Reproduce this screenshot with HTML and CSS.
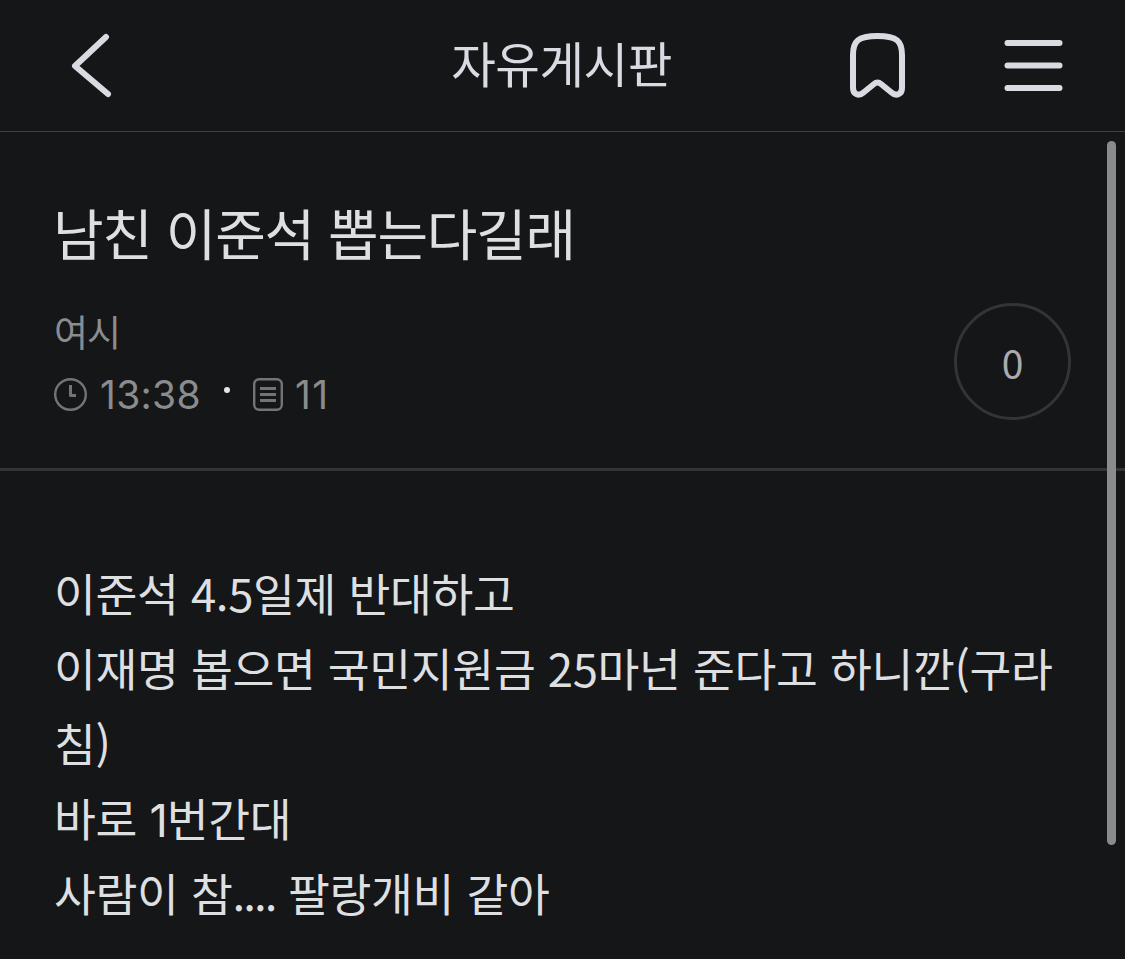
FILE: index.html
```html
<!DOCTYPE html>
<html lang="ko">
<head>
  <meta charset="UTF-8">
  <title>자유게시판</title>
  <link rel="stylesheet" href="styles.css">
</head>
<body>
  <header class="topbar">
    <svg class="icon-back" width="48" height="70" viewBox="0 0 48 70" fill="none">
      <path d="M42 6L11 35L44 63"/>
    </svg>
    <h1 class="board-name">자유게시판</h1>
    <div class="actions">
      <svg width="56" height="66" viewBox="0 0 56 66" fill="none">
        <path d="M4 22C4 8 9 3 28.500 3C48 3 53 8 53 22V55C53 61.500 47 63.500 42.500 59.500L32 51Q28.500 48 25 51L14.500 59.500C10 63.500 4 61.500 4 55Z"/>
      </svg>
      <svg width="59" height="66" viewBox="0 0 59 66" fill="none">
        <path d="M3.500 10H55.500M3.500 32.500H55.500M3.500 55H55.500"/>
      </svg>
    </div>
  </header>

  <section class="post-head">
    <h2 class="post-title">남친 이준석 뽑는다길래</h2>
    <div class="post-info">
      <div class="info-left">
        <div class="author">여시</div>
        <div class="meta">
          <svg class="icon-clock" width="34" height="34" viewBox="0 0 34 34" fill="none">
            <circle cx="16.500" cy="16.500" r="15.300"/>
            <path d="M16.500 7V17.500H22"/>
          </svg>
          <span class="time">13:38</span>
          <span class="dot"></span>
          <svg class="icon-doc" width="30" height="34" viewBox="0 0 30 34" fill="none">
            <rect x="1.200" y="1.200" width="27.600" height="30.600" rx="5"/>
            <path d="M7 10.500H23M7 16.500H23M7 22.500H23"/>
          </svg>
          <span class="count">11</span>
        </div>
      </div>
      <div class="likes">0</div>
    </div>
  </section>

  <article class="post-body">
    <p>이준석 4.5일제 반대하고</p>
    <p>이재명 봅으면 국민지원금 25마넌 준다고 하니깐(구라<br>침)</p>
    <p>바로 <span class="one">1</span>번간대</p>
    <p>사람이 참<span class="dots">....</span> 팔랑개비 같아</p>
  </article>

  <div class="scrollbar"></div>
</body>
</html>
```
FILE: styles.css
```css
* {
  box-sizing: border-box;
}

body {
  margin: 0;
  height: 959px;
  overflow: hidden;
  background-color: #151618;
  color: #dedfe1;
  font-family: "Noto Sans CJK KR", sans-serif;
}

h1, h2, p {
  margin: 0;
  font-weight: 400;
  white-space: nowrap;
}

svg {
  display: block;
  stroke-linejoin: round;
}

/* top bar */
.topbar {
  display: grid;
  grid-template-columns: 1fr auto 1fr;
  align-items: center;
  height: 132px;
  padding: 0 62px 0 64px;
  border-bottom: 1px solid #3f4042;
  color: #dadae3;
}

.topbar svg {
  stroke: #dadae3;
  stroke-width: 6;
  stroke-linecap: round;
}

.board-name {
  padding: 0 4px 8px 0;
  font-size: 48.5px;
  line-height: 70px;
  letter-spacing: -0.5px;
}

.actions {
  display: flex;
  justify-content: flex-end;
  gap: 99px;
}

/* title, author, time */
.post-head {
  height: 339px;
  padding: 60px 54px 0;
  border-bottom: 3px solid #333436;
}

.post-title {
  margin-left: -1px;
  font-size: 55px;
  line-height: 78px;
  letter-spacing: -1.25px;
}

.post-info {
  display: flex;
  justify-content: space-between;
  padding-top: 33px;
  color: #8b8c8e;
}

.author {
  padding-top: 3px;
  font-size: 37px;
  line-height: 50px;
  letter-spacing: -1px;
}

.meta {
  display: flex;
  align-items: center;
  height: 46px;
  margin-top: 16px;
  font-family: Inter, sans-serif;
  font-size: 39px;
  line-height: 46px;
}

.meta svg {
  stroke: #737476;
  stroke-width: 2.4;
}

.meta svg path {
  stroke-width: 3;
}

.time {
  margin-left: 12px;
  padding-bottom: 1px;
  width: 124px;
  letter-spacing: 0.3px;
}

.dot {
  width: 6px;
  height: 6px;
  margin: -10px 23px 0 0;
  border-radius: 50%;
  background-color: #e6e6e6;
}

.count {
  margin-left: 12px;
  padding-bottom: 1px;
  letter-spacing: 1.5px;
}

.likes {
  width: 117px;
  height: 117px;
  border: 3px solid #333436;
  border-radius: 50%;
  color: #aaabad;
  font-size: 39px;
  line-height: 113px;
  text-align: center;
}

/* post text */
.post-body {
  padding: 84px 54px 0;
  font-size: 45.5px;
  line-height: 75px;
  letter-spacing: -0.35px;
}

.one {
  font-family: Inter, sans-serif;
  font-size: 45px;
  line-height: 1;
  letter-spacing: -1px;
}

.dots {
  letter-spacing: -1.9px;
}

.scrollbar {
  position: absolute;
  top: 141px;
  right: 9px;
  width: 9px;
  height: 704px;
  border-radius: 5px;
  background-color: #8a8b8d;
}
```
